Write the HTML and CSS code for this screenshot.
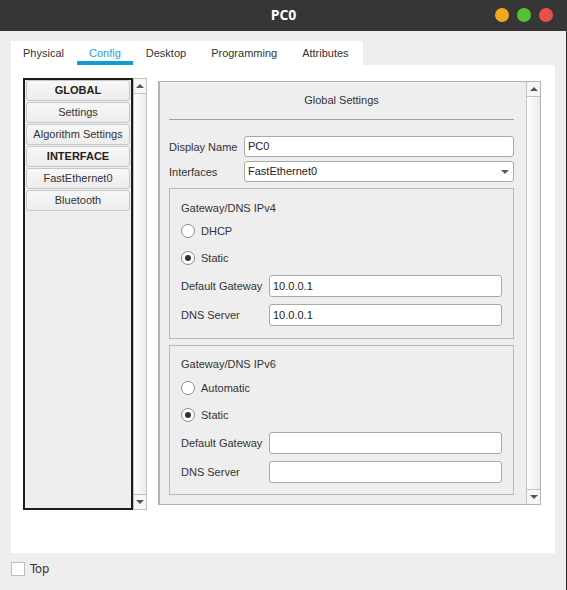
FILE: index.html
```html
<!DOCTYPE html>
<html>
<head>
<meta charset="utf-8">
<link rel="stylesheet" href="styles.css">
</head>
<body>
<div class="window">
  <div class="titlebar">
    <div class="title">PC0</div>
    <div class="lights">
      <span class="light orange"></span>
      <span class="light green"></span>
      <span class="light red"></span>
    </div>
  </div>
  <div class="body">
    <div class="tabs">
      <div class="tab">Physical</div>
      <div class="tab active">Config</div>
      <div class="tab">Desktop</div>
      <div class="tab">Programming</div>
      <div class="tab">Attributes</div>
    </div>
    <div class="panel">
      <div class="side">
        <div class="list">
          <div class="item head">GLOBAL</div>
          <div class="item">Settings</div>
          <div class="item">Algorithm Settings</div>
          <div class="item head">INTERFACE</div>
          <div class="item">FastEthernet0</div>
          <div class="item">Bluetooth</div>
        </div>
        <div class="vscroll boxed">
          <div class="arrow up"><span class="tri-up"></span></div>
          <div class="track"></div>
          <div class="arrow down"><span class="tri-down"></span></div>
        </div>
      </div>
      <div class="main">
        <div class="content">
          <div class="heading">Global Settings</div>
          <div class="sep"></div>
          <div class="row first">
            <div class="label">Display Name</div>
            <div class="field">PC0</div>
          </div>
          <div class="row second">
            <div class="label">Interfaces</div>
            <div class="field select">FastEthernet0<span class="tri-down small"></span></div>
          </div>
          <div class="group">
            <div class="gtitle">Gateway/DNS IPv4</div>
            <div class="radio first"><span class="circle"></span>DHCP</div>
            <div class="radio"><span class="circle checked"></span>Static</div>
            <div class="grow"><div class="glabel">Default Gateway</div><div class="field">10.0.0.1</div></div>
            <div class="grow"><div class="glabel">DNS Server</div><div class="field">10.0.0.1</div></div>
          </div>
          <div class="group second-group">
            <div class="gtitle">Gateway/DNS IPv6</div>
            <div class="radio first"><span class="circle"></span>Automatic</div>
            <div class="radio"><span class="circle checked"></span>Static</div>
            <div class="grow"><div class="glabel">Default Gateway</div><div class="field"></div></div>
            <div class="grow"><div class="glabel">DNS Server</div><div class="field"></div></div>
          </div>
        </div>
        <div class="vscroll">
          <div class="arrow up"><span class="tri-up"></span></div>
          <div class="track"></div>
          <div class="arrow down"><span class="tri-down"></span></div>
        </div>
      </div>
    </div>
    <div class="footer">
      <span class="checkbox"></span><span class="toplabel">Top</span>
    </div>
  </div>
</div>
</body>
</html>
```

FILE: styles.css
```css
* { box-sizing: border-box; }
html, body { margin: 0; padding: 0; }
body {
  width: 567px;
  height: 590px;
  overflow: hidden;
  background: #eeeeee;
  font-family: "Liberation Sans", Arial, sans-serif;
  font-size: 11px;
  color: #333333;
}
.window {
  display: flex;
  flex-direction: column;
  height: 590px;
  background: #363636;
}
.titlebar {
  height: 31px;
  background: #363636;
  border-top-left-radius: 9px;
  position: relative;
  display: flex;
  align-items: center;
  justify-content: center;
}
.title {
  color: #ffffff;
  font-family: "Open Sans", "Liberation Sans", sans-serif;
  font-weight: 700;
  font-size: 14px;
  margin-top: -2px;
}
.lights {
  position: absolute;
  right: 14px;
  top: 8px;
  display: flex;
  gap: 8px;
}
.light {
  width: 14px;
  height: 14px;
  border-radius: 50%;
  display: block;
}
.orange { background: #f1a81c; }
.green { background: #55c132; }
.red { background: #e8504a; }

.body {
  flex: 1;
  background: #eeeeee;
  border-right: 1px solid #2b2b2b;
  padding: 10px 11px 0 11px;
}
.tabs {
  display: flex;
  gap: 1px;
  width: 352px;
  height: 24px;
  background: #ffffff;
}
.tab {
  padding: 5px 12px 0 12px;
  line-height: 14px;
  height: 24px;
  color: #333333;
}
.tab.active {
  color: #2a9fd6;
  border-bottom: 4px solid #139bd3;
}
.panel {
  width: 544px;
  height: 488px;
  background: #ffffff;
  padding: 13px 12px;
  display: flex;
  align-items: flex-start;
  gap: 11px;
}
.side {
  display: flex;
  height: 432px;
}
.list {
  width: 110px;
  height: 432px;
  border: 2px solid #1c1c1c;
  background: #eeeeee;
  padding: 0 1px;
  display: flex;
  flex-direction: column;
  gap: 1px;
}
.item {
  height: 21px;
  background: linear-gradient(#f7f7f7, #ededed);
  border: 1px solid #c6c6c6;
  border-radius: 3px;
  text-align: center;
  line-height: 19px;
  color: #333333;
  white-space: nowrap;
}
.item.head { font-weight: 700; color: #222222; }
.vscroll {
  width: 14px;
  display: flex;
  flex-direction: column;
  border-left: 1px solid #c3c3c3;
  background: linear-gradient(to right, #ffffff, #ebebeb);
}
.vscroll.boxed {
  width: 14px;
  border: 1px solid #c0c0c0;
}
.arrow {
  height: 15px;
  display: flex;
  align-items: center;
  justify-content: center;
  background: #f6f6f6;
}
.arrow.up { border-bottom: 1px solid #c3c3c3; }
.arrow.down { border-top: 1px solid #c3c3c3; }
.track { flex: 1; }
.tri-up {
  width: 0; height: 0;
  border-left: 4px solid transparent;
  border-right: 4px solid transparent;
  border-bottom: 4px solid #555555;
}
.tri-down {
  width: 0; height: 0;
  border-left: 4px solid transparent;
  border-right: 4px solid transparent;
  border-top: 4px solid #555555;
}
.main {
  margin-top: 3px;
  width: 383px;
  height: 424px;
  border: 1px solid #b3b3b3;
  border-left-width: 2px;
  background: #eeeeee;
  display: flex;
}
.content {
  flex: 1;
  padding: 0 12px 0 9px;
  display: flex;
  flex-direction: column;
}
.heading {
  margin-top: 11px;
  line-height: 14px;
  text-align: center;
  color: #333333;
}
.sep {
  margin-top: 12px;
  height: 1px;
  background: #a2a2a2;
}
.row {
  display: flex;
  align-items: center;
}
.row.first { margin-top: 16px; }
.row.second { margin-top: 4px; }
.label { width: 75px; color: #333333; }
.field {
  flex: 1;
  height: 21px;
  background: #ffffff;
  border: 1px solid #a9a9a9;
  border-radius: 3px;
  padding-left: 3px;
  line-height: 19px;
  color: #222222;
}
.select {
  display: flex;
  justify-content: space-between;
  align-items: center;
  padding-right: 4px;
}
.tri-down.small {
  border-top-color: #5a5a5a;
}
.group {
  margin-top: 6px;
  border: 1px solid #b8b8b8;
  padding: 12px 11px 12px 11px;
  display: flex;
  flex-direction: column;
}
.second-group { margin-top: 6px; padding-top: 11px; padding-bottom: 11px; }
.gtitle { line-height: 14px; color: #333333; }
.radio {
  display: flex;
  align-items: center;
  height: 20px;
  margin-top: 7px;
  color: #333333;
}
.radio.first { margin-top: 6px; }
.second-group .radio.first { margin-top: 7px; }
.circle {
  width: 14px;
  height: 14px;
  border-radius: 50%;
  border: 1px solid #8c8c8c;
  background: #ffffff;
  margin-right: 6px;
  display: flex;
  align-items: center;
  justify-content: center;
}
.circle.checked::after {
  content: "";
  width: 6px;
  height: 6px;
  border-radius: 50%;
  background: #333333;
}
.grow {
  display: flex;
  align-items: center;
  margin-top: 7px;
}
.glabel { width: 88px; color: #333333; }
.grow .field { height: 22px; line-height: 20px; }
.footer {
  margin-top: 9px;
  display: flex;
  align-items: center;
  height: 14px;
}
.checkbox {
  width: 14px;
  height: 14px;
  border: 1px solid #bdbdbd;
  background: #ffffff;
}
.toplabel {
  margin-left: 5px;
  font-family: "DejaVu Sans", sans-serif;
  font-size: 11.5px;
  color: #333333;
}
```
